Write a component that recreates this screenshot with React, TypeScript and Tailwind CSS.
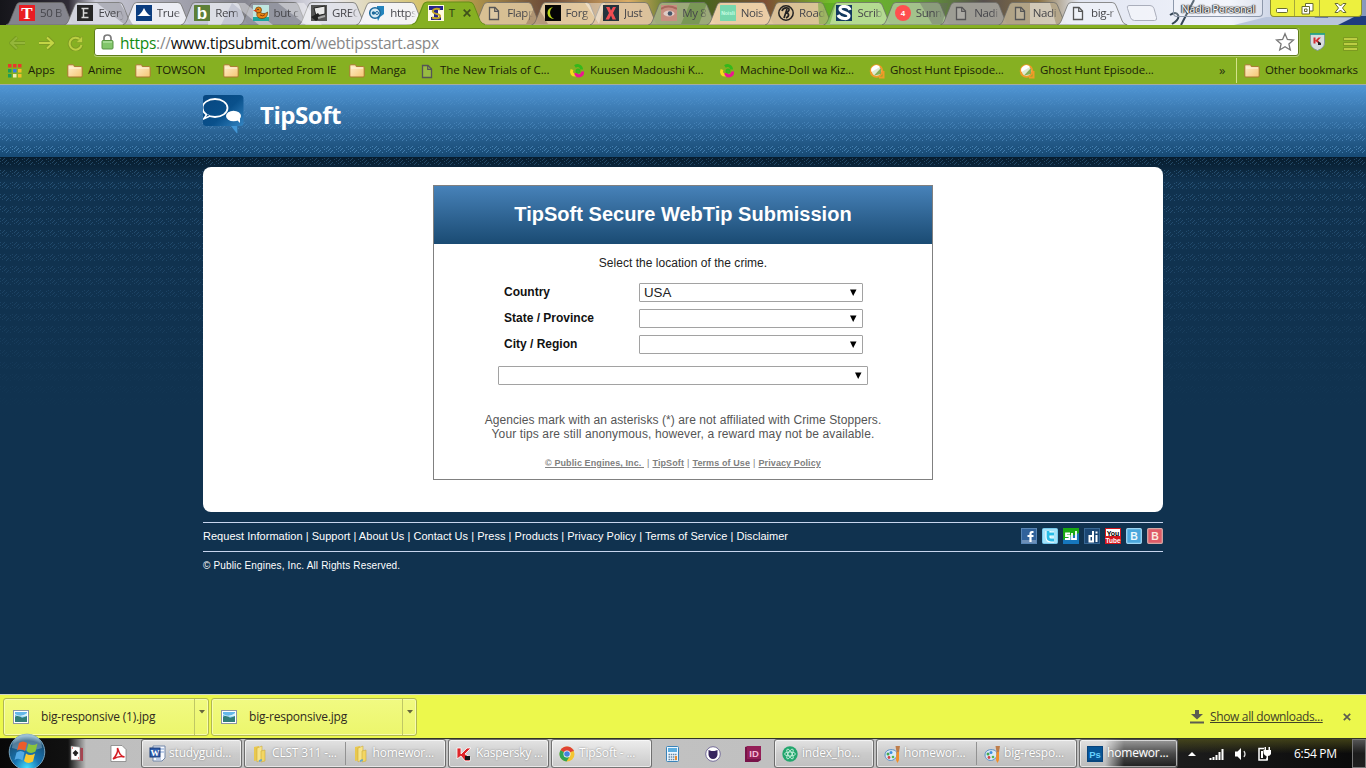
import type { ReactNode } from "react";

const ui = "font-['Open_Sans','Noto_Sans',sans-serif]";
const arial = "font-['Liberation_Sans',Arial,sans-serif]";

/* ---------- small icons ---------- */

const Page = () => (
  <svg width="16" height="16" viewBox="0 0 16 16" className="shrink-0">
    <path d="M3.5 2.5h5.5l3.5 3.5v8.500h-9z" fill="#fff" fillOpacity=".15" stroke="#555" strokeWidth="1.3" />
    <path d="M8.700 2.500v3.800h3.800" fill="none" stroke="#555" strokeWidth="1.200" />
  </svg>
);

const Folder = () => (
  <svg width="16" height="16" viewBox="0 0 16 16" className="shrink-0">
    <defs>
      <linearGradient id="fold" x1="0" y1="0" x2="1" y2="1">
        <stop offset="0" stopColor="#fff0cc" />
        <stop offset="1" stopColor="#f5c673" />
      </linearGradient>
    </defs>
    <path d="M.8 4V2.800q0-1 1-1h4.200q.8 0 1 .9l.3.900h6.900q1 0 1 1v8.400q0 1-1 1H1.800q-1 0-1-1z" fill="url(#fold)" stroke="#a9772f" />
    <path d="M2 5h12" stroke="#fff6df" />
  </svg>
);

const Swirl = () => (
  <svg width="16" height="16" viewBox="0 0 16 16" className="shrink-0" fill="none" strokeWidth="3">
    <path d="M6 3.500c3-2 6.500-.3 6.500 3" stroke="#35b81b" />
    <path d="M3 6.500c-1.500 3.500.5 6 4 5.500" stroke="#f4dc1c" />
    <path d="M6.500 10c1.500 4.500 7.500 3.500 7-1.500" stroke="#ec1690" />
    <circle cx="9" cy="8" r="1" stroke="#35b81b" />
  </svg>
);

const Ghost = () => (
  <svg width="16" height="16" viewBox="0 0 16 16" className="shrink-0">
    <circle cx="7.500" cy="8" r="5.800" fill="#dfead0" stroke="#f09a28" strokeWidth="2" />
    <path d="M2.500 9a5 5 0 0 1 8.500-5z" fill="#fff" />
    <path d="M12 5v6l-7 1.500z" fill="#84ae55" />
    <path d="M10 14.500h4.500V8" fill="none" stroke="#f09a28" strokeWidth="2" />
  </svg>
);

const AppsGrid = () => (
  <svg width="14" height="14" className="shrink-0">
    {["#e8392c", "#e8392c", "#e8392c", "#1f9e55", "#3b7de0", "#f5bf2a", "#1f9e55", "#f0efb0", "#f5bf2a"].map((c, i) => (
      <rect key={i} x={(i % 3) * 5} y={Math.floor(i / 3) * 5} width="3.500" height="3.500" fill={c} />
    ))}
  </svg>
);

const Glyph = ({ bg, fg = "#fff", children, size = 13, serif = false, round = false }: { bg: string; fg?: string; children: ReactNode; size?: number; serif?: boolean; round?: boolean }) => (
  <svg width="16" height="16" viewBox="0 0 16 16" className="shrink-0">
    <rect width="16" height="16" rx={round ? 8 : 0.5} fill={bg} />
    <text x="8" y={8 + size * 0.36} textAnchor="middle" fontSize={size} fontWeight="700" fill={fg} fontFamily={serif ? "Liberation Serif" : "Liberation Sans"}>
      {children}
    </text>
  </svg>
);

const Duck = () => (
  <svg width="16" height="16">
    <rect width="16" height="16" fill="#bfe6df" />
    <path d="M0 12h16v4H0z" fill="#1da6a0" />
    <circle cx="5.500" cy="5" r="3" fill="#e88614" stroke="#6b3e08" strokeWidth=".7" />
    <path d="M4 8c-1 4 2 5.500 5 5.500 4 0 6-3 5.500-6.500-2 2-5 2-7 .5z" fill="#e88614" stroke="#6b3e08" strokeWidth=".7" />
    <path d="M7 10q3 2 5-.5" stroke="#8b3d08" fill="none" />
    <path d="M0 5.500L3.500 4.500v2.500z" fill="#d93414" />
    <circle cx="5" cy="4.500" r=".7" fill="#222" />
  </svg>
);

const tabs: { label: string; icon: ReactNode }[] = [
  { label: "50 B", icon: <Glyph bg="#e91c23" size={17} serif>T</Glyph> },
  { label: "Every", icon: <svg width="16" height="16"><rect width="16" height="16" fill="#262626" /><path d="M4.500 3.500h7M4.500 12.500h7M6.500 3.500v9M6.500 8h4" stroke="#d8d8d8" strokeWidth="1.500" /></svg> },
  { label: "True", icon: <svg width="16" height="16"><rect width="16" height="16" fill="#0b3d80" /><path d="M1 11q4-1.500 7-8 3 6.500 7 8z" fill="#fff" /></svg> },
  { label: "Rem", icon: <Glyph bg="#5d7f37" size={17}>b</Glyph> },
  { label: "but c", icon: <Duck /> },
  { label: "GREC", icon: <svg width="16" height="16"><rect width="16" height="16" fill="#555" /><path d="M3 3l11-2v8l-9 2z" fill="#e8e8e8" stroke="#222" /><path d="M0 12l7-4 3 4-5 4z" fill="#222" /><path d="M7 13l7-2" stroke="#aaa" strokeWidth="2" /></svg> },
  { label: "https", icon: <svg width="16" height="16"><path d="M8 1h7v8l-4 3-2 4-1-4z" fill="#2384bd" /><circle cx="6" cy="8" r="5.300" fill="#d8ebf5" stroke="#1c6a9c" strokeWidth="1.500" /><circle cx="4.500" cy="8" r="1.700" fill="#1c6a9c" /><circle cx="8" cy="8" r="1.500" fill="none" stroke="#1c6a9c" /></svg> },
  { label: "T", icon: <svg width="16" height="16"><rect width="16" height="16" fill="#fffbe0" /><path d="M1 1h14v4h-5v7h3v3H3v-3h3V5H1z" fill="#26268c" /><path d="M12 4.500C8 2.500 4 4.500 5 7s7 1.500 7 4-4 3-8 1.500" fill="none" stroke="#c2a62a" strokeWidth="2" /></svg> },
  { label: "Flapp", icon: <Page /> },
  { label: "Forg", icon: <svg width="16" height="16"><rect width="16" height="16" fill="#050505" /><path d="M8 2a6 6 0 1 0 1 12A7 7 0 0 1 8 2" fill="#b9d31b" /></svg> },
  { label: "Just", icon: <svg width="16" height="16"><rect width="16" height="16" fill="#24333d" /><path d="M3 2h3.500L8 5.500 10 2h3L10 8l3 6.500H9.500L8 10.500 6 14.500H2.500L6 8z" fill="#f04c51" /></svg> },
  { label: "My 8", icon: <svg width="16" height="16"><rect width="16" height="16" fill="#c78e80" /><path d="M0 4q7-5 16 0" stroke="#a8675c" fill="none" strokeWidth="2" /><ellipse cx="8" cy="8.500" rx="5.500" ry="3" fill="#e0cbc5" /><circle cx="9" cy="8.500" r="2.300" fill="#46566a" /></svg> },
  { label: "Nois", icon: <Glyph bg="#77d8ae" fg="#c8ffe5" size={5}>Noisli</Glyph> },
  { label: "Road", icon: <svg width="16" height="16"><circle cx="8" cy="8" r="7.200" fill="none" stroke="#222" strokeWidth="1.500" /><path d="M6 13l3-9M4 6c1-4 8-4 7-1-.5 2-3 3-4 3 4-.5 5 3 1 5" fill="none" stroke="#222" strokeWidth="1.700" /></svg> },
  { label: "Scrib", icon: <svg width="16" height="16"><rect width="16" height="16" fill="#12395f" /><path d="M14 5c-1-4-10-5-10-1 0 4 9 3 9 7 0 4-9 3-11-1" fill="none" stroke="#fff" strokeWidth="3.200" /></svg> },
  { label: "Sunn", icon: <Glyph bg="#ff4f4f" size={8} round>4</Glyph> },
  { label: "Nadi", icon: <Page /> },
  { label: "Nadi", icon: <Page /> },
  { label: "big-r", icon: <Page /> },
];

/* Desktop colours that glow through the glass behind each tab */
const glass = ["#8b8b94", "#d9dae3", "#f0f1f8", "#c8cbd8", "#92949e", "#dfe0e8", "#f5f5fb", "#86b022", "#dbc398", "#e5cda5", "#dec4a0", "#a2ad80", "#f2d5ad", "#dfc69d", "#b9dd98", "#a7c391", "#a29f99", "#b5a78a", "#edf0f8"];

const TabStripArt = () => (
  <svg width="1366" height="25" className="absolute inset-0">
    <defs>
      <linearGradient id="wall">
        <stop offset="0" stopColor="#15151a" /><stop offset=".05" stopColor="#302c36" />
        <stop offset=".07" stopColor="#c9c9d6" /><stop offset=".18" stopColor="#85858f" />
        <stop offset=".24" stopColor="#e9e9f4" /><stop offset=".32" stopColor="#d1bb55" />
        <stop offset=".4" stopColor="#6b4a38" /><stop offset=".46" stopColor="#dbac65" />
        <stop offset=".5" stopColor="#356b18" /><stop offset=".56" stopColor="#7d4d35" />
        <stop offset=".61" stopColor="#72c02a" /><stop offset=".67" stopColor="#64a035" />
        <stop offset=".72" stopColor="#57504e" /><stop offset=".76" stopColor="#897142" />
        <stop offset=".79" stopColor="#e2e6f2" /><stop offset=".9" stopColor="#f0f3fb" />
        <stop offset="1" stopColor="#8698bb" />
      </linearGradient>
    </defs>
    <rect width="1366" height="25" fill="url(#wall)" />
    <path d="M1181 25l13-25M1170 15q6-4 8 0t-6 9" stroke="#364656" strokeWidth="2" fill="none" />
    <path d="M1312 25l9-25h12l-7 25z" fill="#273f80" />
    <path d="M1234 25l32-8 100 1v7z" fill="#b9c5dc" />
    <path d="M1338 25l18-9h10v9z" fill="#1e3c7e" />
    {glass.map((c, i) => {
      const x = 19 + i * 58.4;
      if (i === 7) return null;
      return <path key={i} d={`M${x - 13} 25q3-1 4-4l6-15q1-3.500 4-3.500h41q3 0 4 3.500l6 15q1 3 5 4z`} fill={c} fillOpacity=".94" stroke="#6b6b68" strokeOpacity=".75" />;
    })}
    <g fillOpacity=".4">
      <path d="M97 3h23l13 22h-8z" fill="#73737d" />
      <path d="M232 3h13l28 22h-14z" fill="#fff" />
      <path d="M210 3h22l-11 22h-13z" fill="#fff" />
      <path d="M278 3h26l18 22h-16z" fill="#fff" />
      <path d="M526 24l10-20 12 20z" fill="#755746" />
      <path d="M585 3h20l-6 21z" fill="#fff" />
      <path d="M690 3h17l-8 21h-18z" fill="#477e22" />
      <path d="M818 3h18l-6 21h-11z" fill="#459a16" />
      <path d="M920 3h28l-6 21h-10z" fill="#666" />
      <path d="M1030 3h20l6 21h-26z" fill="#fff" />
    </g>
    <path d="M406 25q8 0 10-4l6-15q1-4 5-4h42q4 0 5 4l6 15q2 4 8 4z" fill="#86b022" />
    <path d="M412 24.500q4-1 5-4l6-15q1-3.500 4-3.500h42q4 0 5 3.500l6 15q1 3 5 4" stroke="#648c17" fill="none" />
    <path d="M1129 5.500h21q3 0 4 3l2.500 9q.8 3-2 3h-20q-3 0-4-3l-3-9q-1-3 1.500-3z" fill="#f5f6fb" fillOpacity=".7" stroke="#aaaebb" />
  </svg>
);

const TitleBar = () => (
  <div className="relative flex h-[25px] w-full overflow-hidden bg-[#cfd4df]">
    <TabStripArt />
    <div className="relative flex w-[1154px] shrink-0 pl-[19px]">
      {tabs.map((t, i) => (
        <div key={i} className="flex h-[25px] w-[58.400px] shrink-0 items-center pt-[1px]">
          <div className="flex w-[21px] shrink-0">{t.icon}</div>
          {i === 7 ? (
            <div className="flex items-center gap-[8px]">
              <span className="w-[6px] text-[11.500px] leading-[16px] text-[#2d3a14]">T</span>
              <svg width="8" height="8"><path d="M.7.7l6.600 6.600M7.300.7L.7 7.300" stroke="#3f501b" strokeWidth="1.700" /></svg>
            </div>
          ) : (
            <span className="-mt-px w-[26px] overflow-hidden text-[11.500px] leading-[16px] tracking-[-0.35px] whitespace-nowrap text-[#46464b] [mask-image:linear-gradient(to_right,#000_70%,transparent)]">{t.label}</span>
          )}
        </div>
      ))}
    </div>
    <div className="relative ml-[19px] flex h-[17px] w-[90px] items-center justify-center rounded-b-[4px] border border-t-0 border-[#8d98ab] bg-white/20">
      <span className="mt-px text-[11px] leading-[14px] tracking-[-0.3px] whitespace-nowrap text-white [text-shadow:0_0_1px_#333,0_0_2px_#333,1px_0_1px_#333,-1px_0_1px_#333]">Nadia Personal</span>
    </div>
    <div className="relative ml-[7px] flex h-[17px] w-[92px] overflow-hidden rounded-b-[4px] border border-t-0 border-[#8c9030] bg-[#edf03e]">
      <div className="flex w-[24px] items-center justify-center border-r border-[#a5a83b] pt-[5px]">
        <svg width="13" height="6"><rect x=".5" y=".5" width="11" height="4" rx="1" fill="#fff" stroke="#666b30" /></svg>
      </div>
      <div className="flex w-[25px] items-center justify-center border-r border-[#a5a83b]">
        <svg width="13" height="13" fill="#fff" stroke="#666b30"><path d="M4.500 1.500h7.500v7.500h-7.500z" /><path d="M1 4.500h7.500v7.500H1z" /><path d="M3.500 7h2.500v2.500H3.500z" /></svg>
      </div>
      <div className="flex flex-1 items-center justify-center">
        <svg width="13" height="12"><path d="M1 1.500h3l2.500 2.500L9 1.500h3L8.500 6l3.500 4.500H9L6.500 8 4 10.500H1L4.500 6z" fill="#fff" stroke="#666b30" /></svg>
      </div>
    </div>
  </div>
);

const Toolbar = () => (
  <div className="flex h-[34px] items-center">
    <svg width="17" height="14" className="mt-[2px] ml-[9px]"><path d="M8 1L2 7l6 6M2 7h14" fill="none" stroke="#789d20" strokeWidth="4" /><path d="M8 1.500L2 7l6 5.500M2 7h14" fill="none" stroke="#94b63a" strokeWidth="2" /></svg>
    <svg width="17" height="14" className="mt-[2px] ml-[12px]"><path d="M9 1l6 6-6 6M1 7h14" fill="none" stroke="#7e9c24" strokeWidth="4" /><path d="M9 1.500L15 7l-6 5.500M1 7h14" fill="none" stroke="#c4d545" strokeWidth="2" /></svg>
    <svg width="17" height="16" className="mt-[2px] ml-[12px]"><path d="M13 4.500a6 6 0 1 0 1.500 5.500" fill="none" stroke="#7e9c24" strokeWidth="4" /><path d="M13 4.500a6 6 0 1 0 1.500 5.500" fill="none" stroke="#bccf42" strokeWidth="2" /><path d="M15.500 1v6.500H9z" fill="#bccf42" stroke="#7e9c24" strokeWidth=".6" /></svg>
    <div className="ml-[10px] flex h-[28px] w-[1205px] items-center rounded-[3px] border border-[#607d1a] bg-white shadow-[0_1px_0_#b9d277,1px_0_0_#a5c35b]">
      <svg width="13" height="16" className="ml-[6px]"><path d="M3 7V4q0-3 3.500-3T10 4v3" fill="none" stroke="#7b7b7b" strokeWidth="1.700" /><rect x="1" y="6.500" width="11" height="8.500" rx="1" fill="#82c66b" stroke="#569343" /><path d="M2 8h9" stroke="#c6edb8" /></svg>
      <span className="ml-[6px] flex-1 pt-[1px] text-[15.500px] leading-[22px] tracking-[-0.270px] text-[#878787]"><span className="text-[#128a12]">https</span>://<span className="text-[#111]">www.tipsubmit.com</span>/webtipsstart.aspx</span>
      <svg width="20" height="20" className="mr-[3px]"><path d="M10 1.800l2.400 5.700 6.100.5-4.600 4 1.400 6L10 14.800 4.700 18l1.400-6-4.600-4 6.100-.5z" fill="#fff" stroke="#777" strokeWidth="1.300" /></svg>
    </div>
    <svg width="17" height="20" className="ml-[10px]"><path d="M1.500 2h14v9q0 5-7 7.500Q1.500 16 1.500 11z" fill="#d7dcdd" stroke="#83999a" /><path d="M1 2h15" stroke="#16a287" strokeWidth="1.500" /><path d="M4.500 5.500h2v3l3-3h2.500L9 8.500l2.500 2.500-2 .5-3-2.500v2.500h-2z" fill="#d42d32" /><path d="M9 9.500l3 1.500v2H9z" fill="#222" /></svg>
    <svg width="15" height="16" className="mt-[3px] ml-[17px]"><path d="M1.500 3h12M1.500 8h12M1.500 13h12" stroke="#7c9a20" strokeWidth="4" strokeLinecap="round" /><path d="M1 3h13M1 8h13M1 13h13" stroke="#bdcd43" strokeWidth="2" /></svg>
  </div>
);

const Bookmark = ({ icon, label, w }: { icon: ReactNode; label: string; w: string }) => (
  <div className={`flex shrink-0 items-center gap-[5px] ${w}`}>
    {icon}
    <span className="-mt-[2px] text-[11.500px] leading-[16px] tracking-[-0.1px] whitespace-nowrap text-[#1b2208]">{label}</span>
  </div>
);

const BookmarkBar = () => (
  <div className="flex h-[25px] items-center pb-[2px] pl-[8px]">
    <div className="flex w-[59px] shrink-0 items-center gap-[6px]">
      <AppsGrid />
      <span className="-mt-[2px] text-[11.500px] leading-[16px] text-[#1b2208]">Apps</span>
    </div>
    <Bookmark w="w-[68px]" icon={<Folder />} label="Anime" />
    <Bookmark w="w-[88px]" icon={<Folder />} label="TOWSON" />
    <Bookmark w="w-[126px]" icon={<Folder />} label="Imported From IE" />
    <Bookmark w="w-[70px]" icon={<Folder />} label="Manga" />
    <Bookmark w="w-[150px]" icon={<Page />} label="The New Trials of C..." />
    <Bookmark w="w-[150px]" icon={<Swirl />} label="Kuusen Madoushi K..." />
    <Bookmark w="w-[150px]" icon={<Swirl />} label="Machine-Doll wa Kiz..." />
    <Bookmark w="w-[150px]" icon={<Ghost />} label="Ghost Hunt Episode..." />
    <Bookmark w="w-[200px]" icon={<Ghost />} label="Ghost Hunt Episode..." />
    <span className="-mt-[2px] w-[17px] text-[13px] leading-[16px] text-[#2a3410]">»</span>
    <div className="mr-[7px] h-[25px] w-px bg-[#d4e28a]" />
    <Bookmark w="w-[120px]" icon={<Folder />} label="Other bookmarks" />
  </div>
);

/* ---------- web page ---------- */

const Texture = () => (
  <svg width="1366" height="610" className="absolute inset-0">
    <defs>
      <pattern id="weave" width="12" height="12" patternUnits="userSpaceOnUse" shapeRendering="crispEdges">
        {[0, 1, 2, 3].flatMap((r) =>
          [0, 4].map((c) => <rect key={`${r}-${c}`} x={(r * 2 + c) % 12} y={1 + r * 2} width="1" height="1" fill="#66a5da" />)
        )}
        {[0, 1, 2].map((r) => <rect key={r} x={(r * 2 + 10) % 12} y={2 + r * 2} width="1" height="1" fill="#66a5da" />)}
        {[0, 1, 2].map((r) => <rect key={`m${r}`} x={r * 2 + 3} y={2 + r * 2} width="1" height="1" fill="#66a5da" />)}
      </pattern>
      <linearGradient id="headFade" x1="0" y1="0" x2="0" y2="1"><stop offset="0" stopColor="#fff" stopOpacity=".12" /><stop offset="1" stopColor="#fff" stopOpacity=".6" /></linearGradient>
      <linearGradient id="bodyFade" x1="0" y1="0" x2="0" y2="1"><stop offset="0" stopColor="#fff" stopOpacity=".3" /><stop offset="1" stopColor="#fff" stopOpacity="0" /></linearGradient>
      <mask id="fade"><rect width="1366" height="73" fill="url(#headFade)" /><rect y="73" width="1366" height="260" fill="url(#bodyFade)" /></mask>
    </defs>
    <rect width="1366" height="610" fill="url(#weave)" mask="url(#fade)" />
  </svg>
);

const Logo = () => (
  <svg width="42" height="40" viewBox="0 0 42 40">
    <defs>
      <linearGradient id="lg" x1="0" y1="0" x2="1" y2="1"><stop offset="0" stopColor="#074680" /><stop offset=".5" stopColor="#09508b" /><stop offset="1" stopColor="#3e91cf" /></linearGradient>
    </defs>
    <path d="M3 0h34q3.500 0 3.500 3.500V28q0 3-3 3h-3v7.500L28 31H3q-3 0-3-3V3q0-3 3-3z" fill="url(#lg)" />
    <path d="M28 31h6v7.500z" fill="#4296d5" />
    <ellipse cx="12" cy="13" rx="12.500" ry="9" fill="none" stroke="#fff" strokeWidth="1.800" />
    <path d="M4 19L.5 24 7 21" fill="#0a4a84" stroke="#fff" strokeWidth="1.500" />
    <ellipse cx="30.500" cy="21" rx="7.500" ry="5.300" fill="#fff" />
    <path d="M33 24l4 4V23z" fill="#fff" />
  </svg>
);

const Select = ({ value = "", w }: { value?: string; w: string }) => (
  <div className={`flex h-[19px] items-center justify-between rounded-[1px] border border-[#a2a2a2] bg-white pr-[5px] pl-[4px] ${w}`}>
    <span className="text-[13.300px] leading-[17px] text-[#222]">{value}</span>
    <svg width="8" height="7" className="-mt-px"><path d="M1 .5h6.500L4.200 7z" fill="#000" /></svg>
  </div>
);

const Field = ({ label, value }: { label: string; value?: string }) => (
  <div className="flex h-[26px] items-start">
    <span className="w-[135px] pt-[2px] text-[12px] leading-[14px] font-bold text-[#111]">{label}</span>
    <Select value={value} w="w-[224px]" />
  </div>
);

const TipForm = () => (
  <div className="mx-auto h-[295px] w-[500px] border border-[#808080] bg-white">
    <div className="flex h-[58px] items-center justify-center bg-linear-to-b from-[#4782b9] to-[#1a4b73] pb-[2px] text-[20px] leading-[24px] font-bold tracking-[0.02px] text-white">TipSoft Secure WebTip Submission</div>
    <div className="pt-[12px] text-center text-[12px] leading-[14px] tracking-[0.03px] text-[#222]">Select the location of the crime.</div>
    <div className="mt-[13px] pl-[70px]">
      <Field label="Country" value="USA" />
      <Field label="State / Province" />
      <Field label="City / Region" />
    </div>
    <div className="mt-[5px] pl-[64px]"><Select w="w-[370px]" /></div>
    <div className="mt-[28px] text-center text-[12px] leading-[14px] text-[#555]">
      <div className="tracking-[0.08px]">Agencies mark with an asterisks (*) are not affiliated with Crime Stoppers.</div>
      <div className="tracking-[0.12px]">Your tips are still anonymous, however, a reward may not be available.</div>
    </div>
    <div className="mt-[17px] flex justify-center gap-[3px] text-[9px] leading-[11px] font-bold tracking-[0.1px] whitespace-pre text-[#808080]">
      <span className="underline">© Public Engines, Inc. </span><span className="font-normal">|</span>
      <span className="underline">TipSoft</span><span className="font-normal">|</span>
      <span className="underline">Terms of Use</span><span className="font-normal">|</span>
      <span className="underline">Privacy Policy</span>
    </div>
  </div>
);

const Social = () => (
  <div className="flex gap-[5px]">
    <svg width="16" height="16"><rect x=".5" y=".5" width="15" height="15" fill="#31629b" stroke="#5885b5" /><path d="M1 12h14v3H1z" fill="#6d8fb8" /><path d="M12.500 4h-1.500q-1.500 0-1.500 2v8M6.500 8h6" fill="none" stroke="#fff" strokeWidth="2.200" /></svg>
    <svg width="16" height="16"><rect x=".5" y=".5" width="15" height="15" rx="1" fill="#a4e2fa" stroke="#75c9ed" /><path d="M6 3v6q0 3 3 3h3M5 6h7" fill="none" stroke="#fff" strokeWidth="5" /><path d="M6 3v6q0 3 3 3h3M5 6h7" fill="none" stroke="#29bce8" strokeWidth="2.800" /></svg>
    <svg width="16" height="16"><rect width="16" height="16" fill="#1676bc" /><path d="M0 0h16v5L0 12z" fill="#19aa12" /><path d="M7 5.500H3v2.500h3.500v3H2M9 5v6h4V3" fill="none" stroke="#fff" strokeWidth="1.800" /></svg>
    <svg width="16" height="16"><rect x=".5" y=".5" width="15" height="15" fill="#1b4774" stroke="#376794" /><path d="M9 3v10.500H5.500V8H9M12.500 7v7M12.500 3.500v2" fill="none" stroke="#fff" strokeWidth="2" /></svg>
    <svg width="16" height="16"><rect width="16" height="16" fill="#d4161c" /><rect x="1" y="1" width="14" height="7" fill="#fff" /><text x="8" y="7.500" textAnchor="middle" fontFamily="Liberation Sans" fontWeight="700" fontSize="7" fill="#000">You</text><text x="8" y="14.500" textAnchor="middle" fontFamily="Liberation Sans" fontWeight="700" fontSize="6.500" fill="#fff">Tube</text></svg>
    <svg width="16" height="16"><rect x=".7" y=".7" width="14.600" height="14.600" rx="1" fill="#4ba7dc" stroke="#9dd6f4" strokeWidth="1.300" /><text x="8" y="12" textAnchor="middle" fontFamily="Liberation Sans" fontWeight="700" fontSize="10.500" fill="#eef8fd">B</text></svg>
    <svg width="16" height="16"><rect x=".7" y=".7" width="14.600" height="14.600" rx="1" fill="#df5b67" stroke="#d5a6a4" strokeWidth="1.300" /><text x="8" y="12" textAnchor="middle" fontFamily="Liberation Sans" fontWeight="700" fontSize="10.500" fill="#fae9e0">B</text></svg>
  </div>
);

const WebPage = () => (
  <div className={`relative h-[610px] overflow-hidden border-t border-[#a7aca0] bg-[#10324f] ${arial}`}>
    <div className="absolute inset-x-0 top-0 h-[72px] bg-linear-to-b from-[#5096d5] to-[#174a74]" />
    <div className="absolute inset-x-0 top-[72px] h-[24px] bg-linear-to-b from-[#071c2d] to-[#10324f]" />
    <Texture />
    <div className="relative mx-auto w-[960px]">
      <div className="flex h-[82px] pt-[10px]">
        <Logo />
        <span className="mt-[5px] ml-[15px] text-[24px] leading-[30px] font-bold tracking-[-0.450px] text-white font-['Open_Sans',sans-serif]">TipSoft</span>
      </div>
      <div className="h-[345px] rounded-[8px] bg-white pt-[18px]"><TipForm /></div>
      <div className="mt-[10px] flex h-[30px] items-center justify-between border-y border-[#c7d5ee] pb-[2px] text-[11px] leading-[14px] text-white">
        <span className="tracking-[0.03px] whitespace-nowrap">Request Information | Support | About Us | Contact Us | Press | Products | Privacy Policy | Terms of Service | Disclaimer</span>
        <Social />
      </div>
      <div className="mt-[8px] text-[10px] leading-[12px] tracking-[0.15px] text-white">© Public Engines, Inc. All Rights Reserved.</div>
    </div>
  </div>
);

/* ---------- downloads shelf ---------- */

const Download = ({ name }: { name: string }) => (
  <div className="flex h-[38px] w-[206px] rounded-[3px] border border-[#b1b850] bg-linear-to-b from-[#f1fa82] to-[#ecf66c] shadow-[inset_0_0_0_1px_#f7fbb0]">
    <div className="flex w-[191px] items-center border-r border-[#bfc765] pl-[9px]">
      <svg width="16" height="14"><rect x=".5" y=".5" width="15" height="13" fill="#fff" stroke="#8c96a5" /><path d="M2 2h12v10H2z" fill="#65b8ea" /><path d="M2 7q4-3 7 1l5-2v6H2z" fill="#317e78" /><path d="M2 4q6 4 12-1v3Q8 8 2 5z" fill="#d7f1fa" /></svg>
      <span className="ml-[12px] text-[12px] leading-[16px] tracking-[-0.2px] text-[#302a20]">{name}</span>
    </div>
    <svg width="6" height="4" className="mt-[11px] ml-[4px]"><path d="M0 0h6L3 3.500z" fill="#66663d" /></svg>
  </div>
);

const Shelf = () => (
  <div className="flex h-[44px] items-center gap-[2px] border-t border-[#cfd5c8] bg-[#ecf84c] pl-[3px]">
    <Download name="big-responsive (1).jpg" />
    <Download name="big-responsive.jpg" />
    <svg width="14" height="14" className="ml-[771px]"><path d="M5 0h4v4h4L7 9.500 1 4h4zM0 11.500h14v2H0z" fill="#5d5d50" /></svg>
    <span className="ml-[4px] w-[114px] text-[12px] leading-[16px] tracking-[-0.350px] whitespace-nowrap text-[#424228] underline">Show all downloads...</span>
    <svg width="8" height="8" className="ml-[17px]"><path d="M.8.8l6.400 6.400M7.200.8L.8 7.200" stroke="#5d5d50" strokeWidth="1.700" /></svg>
  </div>
);

/* ---------- Windows task bar ---------- */

const Orb = () => (
  <svg width="38" height="38" viewBox="0 0 38 38" className="absolute -top-[6px] left-[8px]">
    <defs>
      <radialGradient id="orb" cx=".5" cy=".95" r=".9"><stop offset="0" stopColor="#42e0ff" /><stop offset=".4" stopColor="#1875b3" /><stop offset=".85" stopColor="#185077" /><stop offset="1" stopColor="#7babc7" /></radialGradient>
    </defs>
    <circle cx="19" cy="19" r="17.800" fill="url(#orb)" stroke="#75a2bd" />
    <path d="M4 15a15 14 0 0 1 30 0q-14 5-30 0" fill="#fff" fillOpacity=".25" />
    <path d="M11 10q4-3 8 0l-2 8q-4-3-8-.5z" fill="#ed5c2b" />
    <path d="M20.500 10.500q4 3 9 0l-2 8q-5 3-9-.5z" fill="#8ac43b" />
    <path d="M8.500 19.500q4-3 8 0l-2 8q-4-3-8-.5z" fill="#52a9e5" />
    <path d="M18 20.500q4 3 9 0l-2 8q-5 3-9-.5z" fill="#fac92f" />
  </svg>
);

const FilesIcon = () => (
  <svg width="16" height="18"><path d="M2 2l5-1v14l-5 1z" fill="#e9c84d" /><path d="M5 3l5-2v13l-5 3z" fill="#f7e48a" stroke="#ceab3a" strokeWidth=".6" /><path d="M9 6l4-1v11l-4 1z" fill="#f3d663" stroke="#ceab3a" strokeWidth=".6" /><path d="M7 15l3-1v2l-3 1z" fill="#6da9c8" /></svg>
);
const PaintIcon = () => (
  <svg width="17" height="18"><path d="M1 10c0-5 5-6 9-5 4 1 4 8-1 10-4 1.500-8-1-8-5z" fill="#dceaf5" stroke="#5c90c6" /><circle cx="4" cy="9" r="1.500" fill="#46a64f" /><circle cx="7" cy="7.500" r="1.500" fill="#3e8ee0" /><circle cx="5" cy="12.500" r="1.400" fill="#cf4545" /><circle cx="9" cy="12" r="1.300" fill="#53b64e" /><path d="M12.500 7l-.5 8 1.500 3 1.500-3V7z" fill="#f1902b" /><path d="M11.500 1h4.500l-1 6h-2.500z" fill="#bd7d4b" /></svg>
);
const WordIcon = () => (
  <svg width="17" height="17"><path d="M4 1h12v12l-3 3H4z" fill="#f8faff" stroke="#7186a8" /><path d="M11 4h4M11 7h4M7 14h5" stroke="#7f9fd1" /><rect x="1" y="3" width="10" height="9" fill="#315fae" stroke="#183b77" /><text x="6" y="10.500" textAnchor="middle" fontFamily="Liberation Serif" fontWeight="700" fontSize="9" fill="#fff">W</text></svg>
);
const KasperskyIcon = () => (
  <svg width="16" height="16"><path d="M1 2h4v6l6-6h4L9 8l5 3v4H9l-4-5-4 3z" fill="#df2529" stroke="#fff" strokeWidth=".8" /><path d="M9 10h5v4H9z" fill="#161616" /></svg>
);
const ChromeIcon = () => (
  <svg width="16" height="16"><circle cx="8" cy="8" r="7.500" fill="#f4c531" /><path d="M8 8L1.500 4.200A7.500 7.500 0 0 1 14.500 4.500z" fill="#df4234" /><path d="M8 8L1.500 4.200A7.500 7.500 0 0 0 7.500 15.500l3-5z" fill="#2fa454" /><path d="M8 4.500h6.600" stroke="#df4234" strokeWidth="1.500" /><circle cx="8" cy="8" r="3.500" fill="#fff" /><circle cx="8" cy="8" r="2.800" fill="#4482dd" /></svg>
);
const AtomIcon = () => (
  <svg width="16" height="16"><circle cx="8" cy="8" r="7.700" fill="#22a66d" /><g fill="none" stroke="#d2f5e3" strokeWidth=".8"><ellipse cx="8" cy="8" rx="5.500" ry="2" /><ellipse cx="8" cy="8" rx="5.500" ry="2" transform="rotate(60 8 8)" /><ellipse cx="8" cy="8" rx="5.500" ry="2" transform="rotate(120 8 8)" /></g></svg>
);

const Task = ({ icon, label }: { icon: ReactNode; label: string }) => (
  <div className="flex min-w-0 flex-1 items-center pl-[7px]">
    <div className="flex w-[20px] shrink-0 items-center">{icon}</div>
    <span className="-mt-px text-[12px] leading-[16px] tracking-[-0.18px] whitespace-nowrap text-white [text-shadow:0_0_2px_#777]">{label}</span>
  </div>
);

const Group = ({ w, active = false, children }: { w: string; active?: boolean; children: ReactNode }) => (
  <div className={`flex h-[29px] shrink-0 rounded-[3px] border border-[#555]/80 shadow-[inset_0_0_0_1px_rgba(255,255,255,.6)] ${w} ${active ? "bg-linear-to-b from-[#ededed] to-[#c9c9c9]" : "bg-linear-to-b from-white/55 via-white/20 to-white/0"}`}>{children}</div>
);

const TaskBar = () => (
  <div className="relative flex h-[30px] items-end border-t border-[#313426] bg-[linear-gradient(to_right,#080808_0,#111_68px,#bebebe_86px,#c3c3c3_500px,#bcbcbc_1105px,#222_1124px,#090909_1366px)]">
    <Orb />
    <div className="flex h-[29px] w-[141px] shrink-0 items-center pl-[70px]">
      <svg width="14" height="17"><path d="M3 2l10 1v13L4 15z" fill="#a64450" /><path d="M1 1l9 1v13H1z" fill="#fff" stroke="#777" strokeWidth=".6" /><path d="M5.500 5l3 3-2 2v1h-2v-1l-2-2z" fill="#222" /><path d="M2 3h1M8 13h1" stroke="#d22" /></svg>
      <svg width="17" height="17" className="ml-[26px]"><path d="M1 .5h11l4 4v12H1z" fill="#fff" stroke="#777" strokeWidth=".7" /><path d="M3 14C7 10 8 6 7.500 3c2 6 3 8 7 9-4-1.500-7-.5-11.500 2" fill="none" stroke="#d51e25" strokeWidth="1.500" /></svg>
    </div>
    <Group w="w-[101px]"><Task icon={<WordIcon />} label="studyguid..." /></Group>
    <div className="w-[2px] shrink-0" />
    <Group w="w-[202px]">
      <Task icon={<FilesIcon />} label="CLST 311 -..." />
      <div className="my-[2px] w-px bg-[#929292]" />
      <Task icon={<FilesIcon />} label="homewor..." />
    </Group>
    <div className="w-[2px] shrink-0" />
    <Group w="w-[101px]"><Task icon={<KasperskyIcon />} label="Kaspersky ..." /></Group>
    <div className="w-[2px] shrink-0" />
    <Group w="w-[101px]" active><Task icon={<ChromeIcon />} label="TipSoft - ..." /></Group>
    <div className="flex h-[29px] w-[122px] shrink-0 items-center pl-[14px]">
      <svg width="13" height="16"><rect x=".5" y=".5" width="12" height="15" rx="1" fill="#edf7ff" stroke="#3a83b9" /><rect x="2" y="2" width="9" height="4" fill="#5caee0" /><path d="M2.500 8.500h8M2.500 11h8M2.500 13.500h8" stroke="#6689a4" strokeWidth="1.500" strokeDasharray="1.500 .7" /><path d="M9 10h2v4H9z" fill="#e68b30" /></svg>
      <svg width="16" height="16" className="ml-[26px]"><circle cx="8" cy="8" r="7.300" fill="#fff" stroke="#746c98" /><path d="M3.500 4l3 1h3l3-1v5q-1 4-4.500 4t-4.500-4z" fill="#38265f" /></svg>
      <svg width="16" height="16" className="ml-[24px]"><path d="M0 1l3-1h13v14l-3 2H0z" fill="#781349" /><path d="M2 0h14v13H2z" fill="#941f58" /><text x="9" y="11" textAnchor="middle" fontFamily="Liberation Sans" fontSize="9.500" fontWeight="700" fill="#f3b9d6">ID</text></svg>
    </div>
    <Group w="w-[100px]"><Task icon={<AtomIcon />} label="index_ho..." /></Group>
    <div className="w-[2px] shrink-0" />
    <Group w="w-[201px]">
      <Task icon={<PaintIcon />} label="homewor..." />
      <div className="my-[2px] w-px bg-[#929292]" />
      <Task icon={<PaintIcon />} label="big-respo..." />
    </Group>
    <div className="w-[2px] shrink-0" />
    <Group w="w-[99px]"><Task icon={<svg width="16" height="16"><rect width="16" height="16" fill="#07447d" /><path d="M1 1h14v13H1z" fill="#075596" /><text x="8" y="11.500" textAnchor="middle" fontFamily="Liberation Sans" fontSize="9.500" fontWeight="700" fill="#66d0ff">Ps</text></svg>} label="homewor..." /></Group>
    <div className="flex h-[29px] flex-1 items-center bg-linear-to-b from-[#55551c]/70 via-transparent to-transparent">
      <svg width="8" height="4" className="ml-[10px]"><path d="M0 4l4-4 4 4z" fill="#fff" /></svg>
      <svg width="15" height="12" className="ml-[13px]"><path d="M1.500 12v-2M4.500 12V9M7.500 12V7M10.500 12V4M13.500 12V1" stroke="#fff" strokeWidth="2" /></svg>
      <svg width="13" height="14" className="ml-[10px]"><path d="M1 4.500h2.500L7 1v12L3.500 9.500H1z" fill="#fff" /><path d="M10 4q2 3 0 6" stroke="#ddd" fill="none" strokeWidth="1.300" /></svg>
      <svg width="15" height="15" className="ml-[10px]"><path d="M7 2.500H2V14h8v-2" fill="none" stroke="#fff" strokeWidth="1.500" /><path d="M4 5h2v7H4zM6.500 4H14v4q-1 2-3 2v4H9.500v-4Q6.500 9 6.500 6zM7.500 1H9v3H7.500zM11.500 1H13v3h-1.500z" fill="#fff" /></svg>
      <span className="ml-[22px] w-[58px] text-[12px] leading-[16px] tracking-[-0.3px] whitespace-nowrap text-white">6:54 PM</span>
      <div className="h-[29px] flex-1 border border-[#777] bg-linear-to-b from-[#555] via-[#1c1c1c] to-[#202020]" />
    </div>
  </div>
);

export default function App() {
  return (
    <div className={`flex h-[768px] w-[1366px] flex-col overflow-hidden ${ui}`}>
      <TitleBar />
      <div className="h-[59px] bg-[#86b022]">
        <Toolbar />
        <BookmarkBar />
      </div>
      <WebPage />
      <Shelf />
      <TaskBar />
    </div>
  );
}
